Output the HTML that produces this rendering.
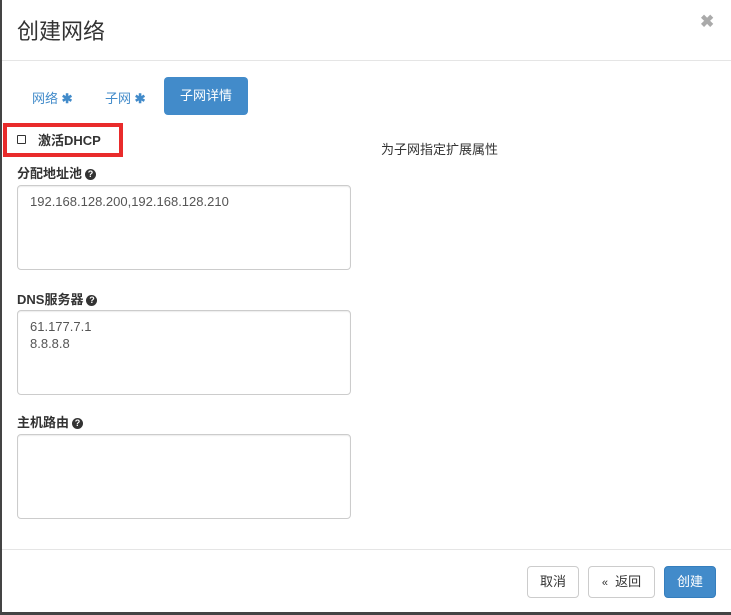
<!DOCTYPE html>
<html><head><meta charset="utf-8"><style>
*{box-sizing:border-box}
body{margin:0;width:731px;height:615px;background:#fff;font-family:"Liberation Sans","Noto Sans CJK SC",sans-serif;font-size:13px;color:#333;position:relative;overflow:hidden}
.a{position:absolute}
.edgeL{left:0;top:0;width:2px;height:615px;background:#444}
.edgeB{left:0;top:612px;width:731px;height:3px;background:#444}
.title{left:17px;top:14px;font-size:22px;color:#333}
.close{left:700px;top:12px;font-size:17px;font-weight:bold;color:#aaa}
.hr1{left:2px;top:60px;width:729px;height:1px;background:#e5e5e5}
.hr2{left:2px;top:549px;width:729px;height:1px;background:#e5e5e5}
.tab{top:88px;color:#428bca;font-size:13px}
.act{left:164px;top:77px;width:84px;height:38px;background:#428bca;color:#fff;border-radius:4px;text-align:center;line-height:38px;font-size:13px}
.red{left:3px;top:123px;width:120px;height:34px;border:4px solid #e92b2b}
.cb{left:17px;top:135px;width:9px;height:9px;border:1px solid #333;border-radius:1px}
.lbl{font-weight:bold;color:#333;font-size:13px}
.q{display:inline-block;width:11px;height:11px;border-radius:50%;background:#333;color:#fff;font-size:9px;line-height:11px;text-align:center;vertical-align:1px;margin-left:3px}
.ta{left:17px;width:334px;height:85px;border:1px solid #ccc;border-radius:4px;padding:7px 12px;color:#555;font-size:13px;line-height:17px;box-shadow:inset 0 1px 1px rgba(0,0,0,.075)}
.btn{top:566px;height:32px;border:1px solid #ccc;border-radius:4px;text-align:center;line-height:30px;font-size:13px;color:#333;background:#fff}
</style></head><body>
<div class="a edgeL"></div>
<div class="a title">创建网络</div>
<div class="a close">✖</div>
<div class="a hr1"></div>
<div class="a tab" style="left:32px">网络 <b>✱</b></div>
<div class="a tab" style="left:105px">子网 <b>✱</b></div>
<div class="a act">子网详情</div>
<div class="a red"></div>
<div class="a cb"></div>
<div class="a lbl" style="left:38px;top:130px">激活DHCP</div>
<div class="a" style="left:381px;top:139px;font-size:13px">为子网指定扩展属性</div>
<div class="a lbl" style="left:17px;top:163px">分配地址池<span class="q">?</span></div>
<div class="a ta" style="top:185px">192.168.128.200,192.168.128.210</div>
<div class="a lbl" style="left:17px;top:289px">DNS服务器<span class="q">?</span></div>
<div class="a ta" style="top:310px">61.177.7.1<br>8.8.8.8</div>
<div class="a lbl" style="left:17px;top:412px">主机路由<span class="q">?</span></div>
<div class="a ta" style="top:434px"></div>
<div class="a hr2"></div>
<div class="a btn" style="left:527px;width:52px">取消</div>
<div class="a btn" style="left:588px;width:67px"><span style="font-size:11px">«</span>&nbsp; 返回</div>
<div class="a btn" style="left:664px;width:52px;background:#428bca;border-color:#357ebd;color:#fff">创建</div>
<div class="a edgeB"></div>
</body></html>
